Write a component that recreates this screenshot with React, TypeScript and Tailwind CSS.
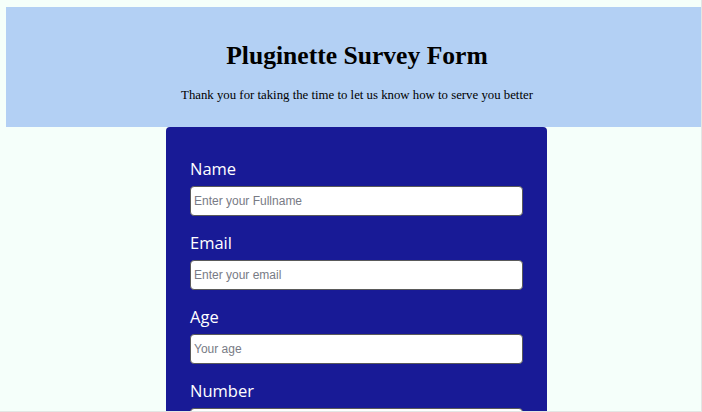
const fields = [
  { label: "Name", placeholder: "Enter your Fullname", type: "text" },
  { label: "Email", placeholder: "Enter your email", type: "email" },
  { label: "Age", placeholder: "Your age", type: "number" },
  { label: "Number", placeholder: "Your phone number", type: "tel" },
];

export default function App() {
  return (
    <div className="box-border h-[412px] w-[702px] overflow-hidden border-r border-b border-[#e3e6e4] bg-[#f5fffa]">
      <div className="pl-[6px] pt-[7px]">
        <header className="h-[120px] w-[702px] bg-[#b3d0f4] pt-[34px] text-center text-black [font-family:'Liberation_Serif','Times_New_Roman',serif]">
          <h1 className="text-[25.6px] font-bold leading-[30px]">Pluginette Survey Form</h1>
          <p className="mt-[16px] text-[12.8px] leading-[16px]">
            Thank you for taking the time to let us know how to serve you better
          </p>
        </header>
        <div className="flex w-[702px] pl-[160px]">
          <form className="w-[381px] rounded-t-[4px] bg-[#181a96] pl-[24px] pr-[24px] pt-[31px] pb-[20px]">
            {fields.map((f) => (
              <div key={f.label} className="mb-[16px]">
                <label className="mb-[6px] block text-[16.5px] leading-[22px] text-white [font-family:'Open_Sans','Noto_Sans',sans-serif]">
                  {f.label}
                </label>
                <input
                  type={f.type}
                  placeholder={f.placeholder}
                  className="box-border block h-[30px] w-[333px] rounded-[4px] border border-[#5a5a5a] bg-white px-[3px] text-[12px] text-black placeholder:text-[#787b85] [font-family:'Liberation_Sans',Arial,sans-serif]"
                />
              </div>
            ))}
          </form>
        </div>
      </div>
    </div>
  );
}
